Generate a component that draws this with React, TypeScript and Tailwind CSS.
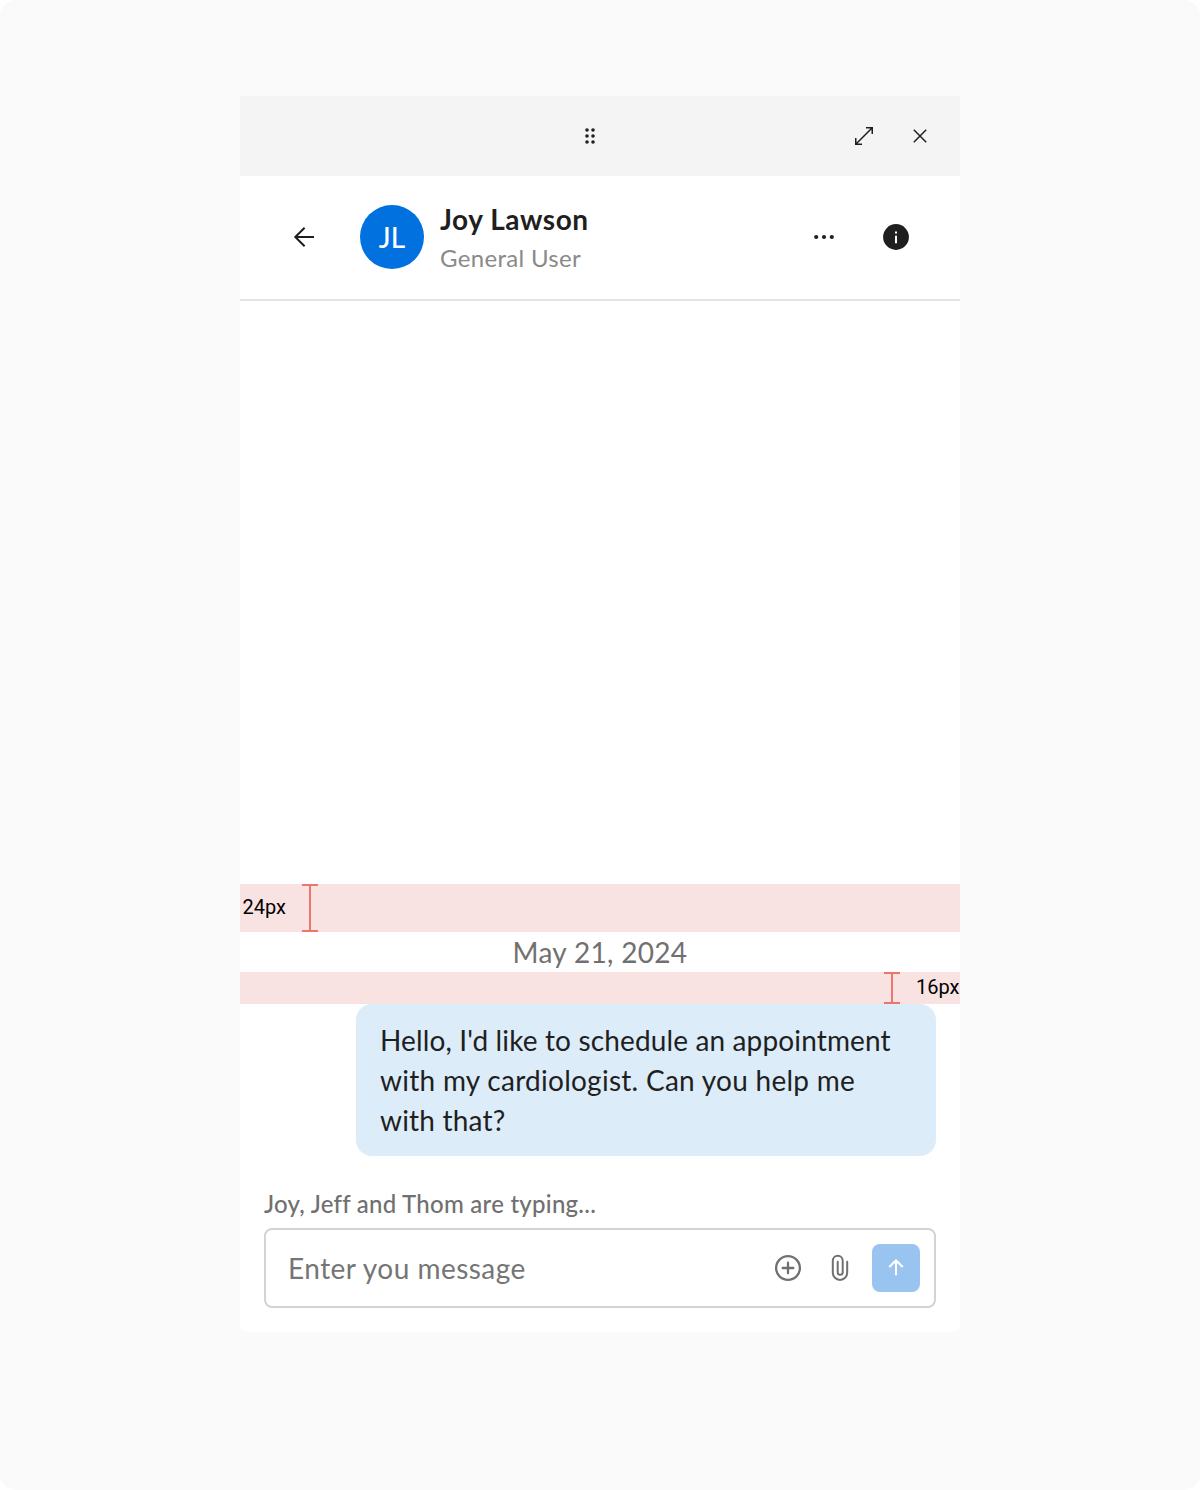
import React from "react";

function Grip() {
  return (
    <svg width="12" height="18" viewBox="0 0 12 18" fill="#1f1f1f">
      {[3, 9, 15].map((y) => (
        <React.Fragment key={y}>
          <circle cx="3" cy={y} r="1.8" />
          <circle cx="9" cy={y} r="1.8" />
        </React.Fragment>
      ))}
    </svg>
  );
}

function Expand() {
  return (
    <svg width="20" height="20" viewBox="0 0 20 20" fill="none" stroke="#1f1f1f" strokeWidth="1.5">
      <path d="M12 1.75h6.25V8M18.25 1.75L1.75 18.25M1.75 12v6.25H8" />
    </svg>
  );
}

function Close() {
  return (
    <svg width="16" height="16" viewBox="0 0 16 16" fill="none" stroke="#1f1f1f" strokeWidth="1.5">
      <path d="M1.8 1.8l12.4 12.4M14.2 1.8L1.8 14.2" />
    </svg>
  );
}

function Back() {
  return (
    <svg width="24" height="24" viewBox="0 0 24 24" fill="none" stroke="#1f1f1f" strokeWidth="2">
      <path d="M12.6 2.8L3.3 12l9.3 9.2M3.3 12H22" />
    </svg>
  );
}

function Plus() {
  return (
    <svg width="28" height="28" viewBox="0 0 28 28" fill="none" stroke="#707070" strokeWidth="2.3" strokeLinecap="round">
      <circle cx="14" cy="14" r="11.9" />
      <path d="M14 8.7v10.6M8.7 14h10.6" />
    </svg>
  );
}

function Clip() {
  return (
    <svg width="18" height="28" viewBox="0 0 18 28" fill="none" stroke="#707070" strokeWidth="2" strokeLinecap="round">
      <path d="M16.2 7.7v11a7.2 7.2 0 0 1-14.4 0V6.7a4.8 4.8 0 0 1 9.9 0v11.6a2.5 2.5 0 0 1-5 0V7.7" />
    </svg>
  );
}

function Spacer({ label, right }: { label: string; right?: boolean }) {
  return (
    <div
      className={
        right
          ? "flex h-8 items-stretch justify-end bg-[#f9e3e2]"
          : "flex h-12 flex-row-reverse items-stretch justify-end bg-[#f9e3e2]"
      }
    >
      <div className="flex w-4 flex-col items-center">
        <div className="h-0.5 w-4 bg-[#ec756c]" />
        <div className="w-0.5 flex-1 bg-[#ec756c]" />
        <div className="h-0.5 w-4 bg-[#ec756c]" />
      </div>
      <span
        className={
          right
            ? "ml-4 w-[44px] self-center pb-0.5 font-['Roboto',sans-serif] text-[20px] leading-6 whitespace-nowrap text-black"
            : "w-[62px] self-center pb-0.5 pl-[2.5px] font-['Roboto',sans-serif] text-[20px] leading-6 whitespace-nowrap text-black"
        }
      >
        {label}
      </span>
    </div>
  );
}

export default function App() {
  return (
    <div className="bg-white">
      <div className="flex h-[1490px] w-[1200px] justify-center rounded-2xl bg-[#fafafa] pt-24 font-['Lato',sans-serif] text-[#1f1f1f]">
        <div className="flex h-[1236px] w-[720px] flex-col overflow-hidden rounded-lg rounded-t-none bg-white">
          <div className="grid h-20 shrink-0 grid-cols-[344px_1fr_auto] items-center bg-[#f4f4f4]">
            <div />
            <Grip />
            <div className="flex items-center justify-end gap-[38px] pr-8">
              <Expand />
              <Close />
            </div>
          </div>

          <div className="flex h-[125px] shrink-0 items-center border-b-2 border-[#e3e3e3] pr-[51px] pb-px pl-[52px]">
            <Back />
            <div className="ml-11 flex size-16 items-center justify-center rounded-full bg-[#0071de] pb-px text-[28px] font-medium text-white">
              JL
            </div>
            <div className="ml-4 pt-px">
              <div className="text-[28px] leading-10 font-bold tracking-[0.55px]">Joy Lawson</div>
              <div className="text-[24px] leading-[38px] tracking-[0.32px] text-[#8a8a8a]">General User</div>
            </div>
            <svg className="ml-auto" width="22" height="6" viewBox="0 0 22 6" fill="#1f1f1f">
              <circle cx="3.2" cy="3" r="2.1" />
              <circle cx="11" cy="3" r="2.1" />
              <circle cx="18.8" cy="3" r="2.1" />
            </svg>
            <svg className="ml-12" width="26" height="26" viewBox="0 0 26 26">
              <circle cx="13" cy="13" r="12.9" fill="#1f1f1f" />
              <path d="M12 7.4h2v2.1h-2zM12 11.8h2v7.4h-2z" fill="white" />
            </svg>
          </div>

          <div className="flex flex-1 flex-col justify-end">
            <Spacer label="24px" />
            <div className="h-10 text-center text-[28px] leading-10 tracking-[0.32px] text-[#707070]">May 21, 2024</div>
            <Spacer label="16px" right />
            <div className="mr-6 w-[580px] self-end rounded-2xl bg-[#dcecf9] px-6 py-4 text-[28px] leading-10 whitespace-nowrap">
              <div className="tracking-[0.14px]">Hello, I'd like to schedule an appointment</div>
              <div className="tracking-[0.27px]">with my cardiologist. Can you help me</div>
              <div className="tracking-[0.2px]">with that?</div>
            </div>
          </div>

          <div className="shrink-0 px-6 pt-8 pb-6">
            <div className="h-10 text-[24px] leading-8 font-medium tracking-[0.25px] text-[#707070]">
              Joy, Jeff and Thom are typing...
            </div>
            <div className="flex h-20 items-center rounded-lg border-2 border-[#d3d3d3] pr-[14px] pl-[22px]">
              <div className="flex-1 text-[28px] leading-10 tracking-[0.47px] text-[#757575]">Enter you message</div>
              <Plus />
              <div className="mr-[23px] ml-[29px]">
                <Clip />
              </div>
              <div className="flex size-12 items-center justify-center rounded-lg bg-[#99c4f0]">
                <svg width="16" height="18" viewBox="0 0 16 18" fill="none" stroke="white" strokeWidth="2">
                  <path d="M8 16.2V1.6M1.2 8L8 1.5 14.8 8" />
                </svg>
              </div>
            </div>
          </div>
        </div>
      </div>
    </div>
  );
}
